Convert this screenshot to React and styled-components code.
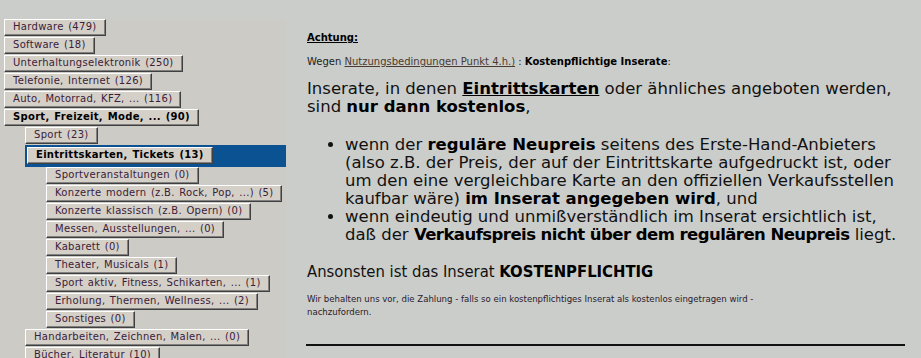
import React from "react";
import styled, { createGlobalStyle } from "styled-components";

const Global = createGlobalStyle`
  html, body { margin: 0; padding: 0; background: #cbcdca; }
  body { font-family: "DejaVu Sans", Verdana, sans-serif; color: #111; overflow: hidden; }
`;

const Page = styled.div`
  display: flex;
  align-items: flex-start;
  width: 921px;
  height: 358px;
  overflow: hidden;
`;

const Sidebar = styled.nav`
  width: 286px;
  flex: none;
  margin-top: 19px;
  height: 339px;
  background: #cdcbc6;
  display: flex;
  flex-direction: column;
  align-items: flex-start;
`;

const Row = styled.div`
  display: flex;
  margin-left: ${(p) => [4, 25, 46][p.$level]}px;
  align-self: ${(p) => (p.$selected ? "stretch" : "flex-start")};
  background: ${(p) => (p.$selected ? "#0a5292" : "transparent")};
  padding: ${(p) => (p.$selected ? "2px 2px 3px 2px" : "0")};
  margin-bottom: ${(p) => (p.$selected ? "0" : "1px")};
`;

const CatButton = styled.a`
  display: block;
  box-sizing: border-box;
  height: 17px;
  line-height: 14px;
  padding: 0 8px 0 8px;
  background: #d4d0c8;
  border: 1px solid;
  border-color: #ffffff #404040 #404040 #ffffff;
  box-shadow: inset -1px -1px 0 #808080;
  font-size: 10px;
  font-weight: ${(p) => (p.$bold ? "bold" : "normal")};
  color: ${(p) => (p.$bold ? "#000" : "#3a2038")};
  white-space: nowrap;
  letter-spacing: 0.3px;
  word-spacing: 1px;
  cursor: pointer;
`;

const Content = styled.main`
  flex: 1;
  padding: 32px 16px 0 21px;
`;

const Heading = styled.div`
  font-size: 10px;
  font-weight: bold;
  text-decoration: underline;
  color: #000;
  margin-bottom: 13px;
`;

const Note = styled.div`
  font-size: 10px;
  color: #222;
  margin-bottom: 13px;
`;

const NoteLink = styled.a`
  color: #4a3a30;
  text-decoration: underline;
`;

const Strong = styled.b`
  color: #000;
  letter-spacing: ${(p) => (p.$tight ? "-0.55px" : "normal")};
`;

const Big = styled.p`
  font-size: 16.5px;
  line-height: 18px;
  margin: 0 0 20px 0;
  color: #111;
`;

const Underlined = styled.b`
  text-decoration: underline;
  color: #000;
`;

const List = styled.ul`
  margin: 0 0 18px 0;
  padding-left: 38px;
  font-size: 16.5px;
  line-height: 18px;
`;

const Ansonsten = styled.p`
  font-family: "DejaVu Sans Condensed", "Liberation Sans", sans-serif;
  font-size: 16.5px;
  line-height: 19px;
  margin: 0 0 11px 0;
  color: #111;
`;

const Small = styled.p`
  font-family: "DejaVu Sans Condensed", "Liberation Sans", sans-serif;
  font-size: 9.5px;
  line-height: 13px;
  margin: 0 0 26px 0;
  color: #2a1a2a;
  max-width: 480px;
`;

const Rule = styled.hr`
  border: none;
  height: 2px;
  background: #111;
  margin: 0 0 0 -1px;
`;

const cats = [
  { t: "Hardware (479)", l: 0 },
  { t: "Software (18)", l: 0 },
  { t: "Unterhaltungselektronik (250)", l: 0 },
  { t: "Telefonie, Internet (126)", l: 0 },
  { t: "Auto, Motorrad, KFZ, ... (116)", l: 0 },
  { t: "Sport, Freizeit, Mode, ... (90)", l: 0, b: true },
  { t: "Sport (23)", l: 1 },
  { t: "Eintrittskarten, Tickets (13)", l: 1, b: true, s: true },
  { t: "Sportveranstaltungen (0)", l: 2 },
  { t: "Konzerte modern (z.B. Rock, Pop, ...) (5)", l: 2 },
  { t: "Konzerte klassisch (z.B. Opern) (0)", l: 2 },
  { t: "Messen, Ausstellungen, ... (0)", l: 2 },
  { t: "Kabarett (0)", l: 2 },
  { t: "Theater, Musicals (1)", l: 2 },
  { t: "Sport aktiv, Fitness, Schikarten, ... (1)", l: 2 },
  { t: "Erholung, Thermen, Wellness, ... (2)", l: 2 },
  { t: "Sonstiges (0)", l: 2 },
  { t: "Handarbeiten, Zeichnen, Malen, ... (0)", l: 1 },
  { t: "Bücher, Literatur (10)", l: 1 },
];

export default function App() {
  return (
    <>
      <Global />
      <Page>
        <Sidebar>
          {cats.map((c) => (
            <Row key={c.t} $level={c.l} $selected={c.s}>
              <CatButton $bold={c.b}>{c.t}</CatButton>
            </Row>
          ))}
        </Sidebar>
        <Content>
          <Heading>Achtung:</Heading>
          <Note>
            Wegen <NoteLink>Nutzungsbedingungen Punkt 4.h.)</NoteLink> :{" "}
            <Strong>Kostenpflichtige Inserate</Strong>:
          </Note>
          <Big>
            Inserate, in denen <Underlined>Eintrittskarten</Underlined> oder
            ähnliches angeboten werden, sind <Strong>nur dann kostenlos</Strong>,
          </Big>
          <List>
            <li>
              wenn der <Strong>reguläre Neupreis</Strong> seitens des
              Erste-Hand-Anbieters (also z.B. der Preis, der auf der
              Eintrittskarte aufgedruckt ist, oder um den eine vergleichbare
              Karte an den offiziellen Verkaufsstellen kaufbar wäre){" "}
              <Strong>im Inserat angegeben wird</Strong>, und
            </li>
            <li>
              wenn eindeutig und unmißverständlich im Inserat ersichtlich ist,
              daß der{" "}
              <Strong $tight>Verkaufspreis nicht über dem regulären Neupreis</Strong>{" "}
              liegt.
            </li>
          </List>
          <Ansonsten>
            Ansonsten ist das Inserat <Strong>KOSTENPFLICHTIG</Strong>
          </Ansonsten>
          <Small>
            Wir behalten uns vor, die Zahlung - falls so ein kostenpflichtiges
            Inserat als kostenlos eingetragen wird - nachzufordern.
          </Small>
          <Rule />
        </Content>
      </Page>
    </>
  );
}
